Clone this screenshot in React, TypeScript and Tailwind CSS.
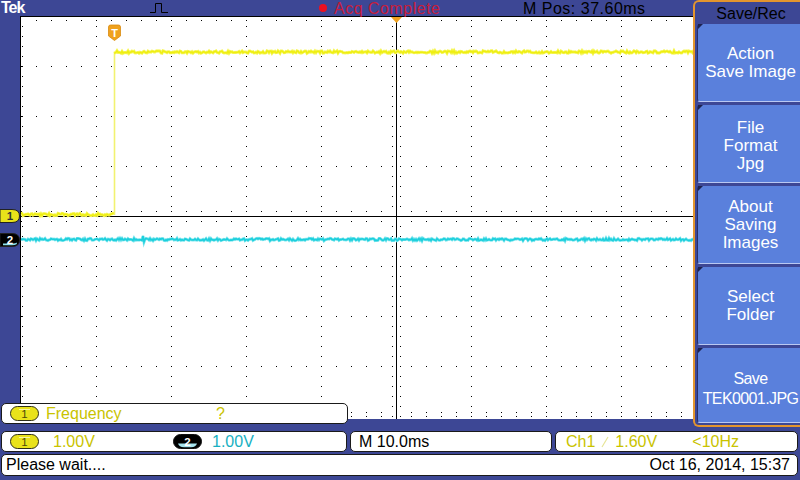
import React from "react";

function rng(seed: number) {
  let a = seed;
  return () => {
    a |= 0;
    a = (a + 0x6d2b79f5) | 0;
    let t = Math.imul(a ^ (a >>> 15), 1 | a);
    t = (t + Math.imul(t ^ (t >>> 7), 61 | t)) ^ t;
    return ((t ^ (t >>> 14)) >>> 0) / 4294967296;
  };
}

const W = 752;
const H = 403;
const CXc = 376;
const CYr = 200;

function Graticule() {
  const dots: React.ReactElement[] = [];
  let k = 0;
  const add = (x: number, y: number, w = 1, h = 1) => {
    dots.push(<rect key={k++} x={x} y={y} width={w} height={h} fill="#000" />);
  };
  const rows = [50, 100, 150, 250, 300, 350, 400];
  const cols = [76, 151, 226, 301, 451, 526, 601, 676, 751];
  for (const r of rows) for (let x = 1; x < W; x += 15) add(x, r);
  for (const c of cols) for (let y = 10; y < H; y += 10) add(c, y);
  for (let x = 1; x < W; x += 15) {
    add(x, CYr - 5);
    add(x, CYr + 5);
  }
  for (let y = 10; y < H; y += 10) {
    add(CXc - 4, y);
    add(CXc + 4, y);
  }
  for (let x = 16; x < W; x += 15) add(x, 4);
  for (let y = 10; y < H; y += 10) add(2, y);
  for (let x = 16; x < W; x += 15) add(x, 396);

  const r1 = rng(7);
  const yl: string[] = [];
  for (let x = 1; x <= 94; x++) yl.push(`${x},${(198.5 + (r1() - 0.5) * 2.4).toFixed(1)}`);
  const yh: string[] = [];
  for (let x = 94; x <= 700; x++) yh.push(`${x},${(36 + (r1() - 0.5) * 2.4).toFixed(1)}`);
  const r2 = rng(21);
  const cy: string[] = [];
  for (let x = 1; x <= 700; x++) {
    let v = 223.5 + (r2() - 0.5) * 2.4;
    if (x === 123) v = 220;
    if (x === 124) v = 226;
    cy.push(`${x},${v.toFixed(1)}`);
  }

  return (
    <svg width={W} height={H} viewBox={`0 0 ${W} ${H}`} shapeRendering="crispEdges" className="block shrink-0">
      <rect x="0" y="0" width={W} height={H} fill="#ffffff" />
      <rect x="0" y="0" width={W} height="1" fill="#000" />
      <rect x="0" y="0" width="1" height={H} fill="#000" />
      <rect x="0" y={CYr} width={W} height="1" fill="#000" />
      <rect x={CXc} y="0" width="1" height={H} fill="#000" />
      {dots}
      <g shapeRendering="auto">
        <polyline points={yl.join(" ")} fill="none" stroke="#f6f65a" strokeWidth="3" />
        <polyline points={yl.join(" ")} fill="none" stroke="#eeee10" strokeWidth="1.4" />
        <line x1="94.5" y1="36" x2="94.5" y2="199" stroke="#f2f270" strokeWidth="1.6" />
        <polyline points={yh.join(" ")} fill="none" stroke="#f6f65a" strokeWidth="3" />
        <polyline points={yh.join(" ")} fill="none" stroke="#eeee10" strokeWidth="1.4" />
        <polyline points={cy.join(" ")} fill="none" stroke="#7fe6ee" strokeWidth="3" />
        <polyline points={cy.join(" ")} fill="none" stroke="#1ccfdc" strokeWidth="1.6" />
        <path d="M88.5,11 Q88.5,9 90.5,9 H98.5 Q100.5,9 100.5,11 V20 L94.5,24.5 L88.5,20 Z" fill="#f0a21e" stroke="#d88a10" strokeWidth="0.8" />
        <text x="94.5" y="20.5" textAnchor="middle" fontSize="11" fontWeight="bold" fill="#fff" fontFamily="Liberation Sans, sans-serif">T</text>
        <polygon points="371,1 382,1 376.5,7" fill="#f0a21e" />
      </g>
    </svg>
  );
}

function LeftMarker({ n, fill, text, band }: { n: string; fill: string; text: string; band?: boolean }) {
  return (
    <svg width="20" height="14" viewBox="0 0 20 14" className="block">
      <path d="M0,0.5 H12 Q19.5,0.5 19.5,7 Q19.5,13.5 12,13.5 H0 Z" fill={fill} stroke="#222" strokeWidth="1" />
      {band ? <path d="M3,10.5 H13 Q16,10.5 16.5,9.5 L17,11 Q15,12.3 12,12.3 H3 Z" fill="#8fe3ec" /> : null}
      <text x="10" y="11" textAnchor="middle" fontSize="11.5" fontWeight="bold" fill={text} fontFamily="Liberation Sans, sans-serif">{n}</text>
    </svg>
  );
}

function Pill1() {
  return (
    <svg width="29" height="15" viewBox="0 0 29 15" className="block shrink-0">
      <rect x="0.5" y="0.5" width="28" height="14" rx="7" fill="#e9e21a" stroke="#2e2e18" />
      <rect x="9" y="3" width="11" height="1" fill="#f8f4a0" />
      <text x="14.5" y="12" textAnchor="middle" fontSize="11.5" fill="#4e4a08" fontFamily="Liberation Sans, sans-serif">1</text>
    </svg>
  );
}

function Pill2() {
  return (
    <svg width="29" height="15" viewBox="0 0 29 15" className="block shrink-0">
      <rect x="0.5" y="0.5" width="28" height="14" rx="7" fill="#000" stroke="#111" />
      <path d="M5,9.5 H24 Q23,13 18,13.2 H11 Q6,13 5,9.5 Z" fill="#a6e4ee" />
      <text x="14.5" y="11.5" textAnchor="middle" fontSize="11.5" fontWeight="bold" fill="#fff" fontFamily="Liberation Sans, sans-serif">2</text>
    </svg>
  );
}

function MenuButton({ lines, h, tight, pad }: { lines: string[]; h: string; tight?: boolean; pad?: string }) {
  return (
    <div
      className={`relative ${h} ${pad ?? ""} bg-[#5a80dc] rounded-l-[3px] border-l border-[#27306a] border-b border-b-[#b9c8f2] flex flex-col items-center justify-center text-white text-[17px] leading-[18px]`}
    >
      <svg width="5" height="5" className="absolute left-0 top-0">
        <polygon points="0,0 5,0 0,5" fill="#1d2250" />
      </svg>
      {lines.map((l) => (
        <span key={l} className={tight ? "text-[16px] tracking-[-0.6px] leading-[20px]" : ""}>
          {l}
        </span>
      ))}
    </div>
  );
}

export default function App() {
  return (
    <div className="relative w-[800px] h-[480px] overflow-hidden bg-[#3d4795] flex flex-col font-['Liberation_Sans',Arial,sans-serif]">
      {/* status bar */}
      <div className="h-[16px] shrink-0 flex items-center text-[16px] leading-[16px]">
        <span className="ml-[1px] w-[149px] text-[16px] leading-[16px] font-black text-white tracking-[-1px]">Tek</span>
        <svg width="18" height="12" viewBox="0 0 18 12" className="block">
          <path d="M0,10.5 H5.5 V1.5 H11.5 V10.5 H18" fill="none" stroke="#000" strokeWidth="1" />
        </svg>
        <span className="ml-[151px] w-[8px] h-[8px] rounded-full bg-[#ec1020]" />
        <span className="ml-[7px] w-[189px] text-[#c71d3c] tracking-[0.5px] translate-y-[1px]">Acq Complete</span>
        <span className="text-black tracking-[0.5px] translate-y-[1px]">M Pos: 37.60ms</span>
      </div>

      {/* display */}
      <div className="flex h-[403px] shrink-0">
        <div className="relative w-[20px] shrink-0">
          <div className="absolute left-0 top-[193px]">
            <LeftMarker n="1" fill="#e9e21a" text="#333" />
          </div>
          <div className="absolute left-0 top-[217px]">
            <LeftMarker n="2" fill="#000" text="#fff" band />
          </div>
        </div>
        <Graticule />
      </div>

      {/* readouts */}
      <div className="mt-[12px] h-[21px] shrink-0 flex gap-[3px] pl-[1px] text-[16px] leading-[18px]">
        <div className="w-[346px] bg-white rounded-[5px] border border-[#1a1a1a] flex items-center pl-[8px]">
          <Pill1 />
          <span className="ml-[14px] w-[120px] text-[#c9c300]">1.00V</span>
          <Pill2 />
          <span className="ml-[10px] text-[#18b0c2]">1.00V</span>
        </div>
        <div className="w-[202px] bg-white rounded-[5px] border border-[#1a1a1a] flex items-center pl-[8px] text-black">
          M 10.0ms
        </div>
        <div className="w-[243px] bg-white rounded-[5px] border border-[#1a1a1a] flex items-center pl-[10px]">
          <span className="text-[#c9c300]">Ch1</span>
          <svg width="8" height="12" viewBox="0 0 8 12" className="ml-[6px] block">
            <path d="M1,11 L7,1" stroke="#e6e496" strokeWidth="1.2" />
          </svg>
          <span className="ml-[6px] w-[77px] text-[#c9c300]">1.60V</span>
          <span className="text-[#c9c300]">&lt;10Hz</span>
        </div>
      </div>
      <div className="mt-[2px] h-[22px] shrink-0 pl-[1px] pr-[2px] text-[16px] leading-[18px]">
        <div className="h-full bg-white rounded-[5px] border border-[#1a1a1a] flex items-center justify-between pl-[4px] pr-[7px] text-black">
          <span>Please wait....</span>
          <span>Oct 16, 2014, 15:37</span>
        </div>
      </div>

      {/* measurement overlay */}
      <div className="absolute left-[1px] top-[403px] w-[347px] h-[21px] bg-white rounded-[5px] border border-[#1a1a1a] flex items-center pl-[8px] text-[16px] leading-[18px]">
        <Pill1 />
        <span className="ml-[7px] w-[170px] text-[#c9c300]">Frequency</span>
        <span className="text-[#c9c300]">?</span>
      </div>

      {/* side menu */}
      <div className="absolute left-[693px] top-0 w-[110px] h-[427px] bg-[#3d4795] border-2 border-r-0 border-[#e3952e] rounded-l-[6px] flex flex-col">
        <div className="h-[22px] shrink-0 flex items-center justify-center text-[16px] text-black leading-[18px] pt-[2px] pl-[4px]">
          Save/Rec
        </div>
        <div className="flex flex-col gap-[3px] pl-[2px]">
          <MenuButton h="h-[78px]" lines={["Action", "Save Image"]} />
          <MenuButton h="h-[78px]" lines={["File", "Format", "Jpg"]} pad="pt-[4px]" />
          <MenuButton h="h-[78px]" lines={["About", "Saving", "Images"]} />
          <MenuButton h="h-[78px]" lines={["Select", "Folder"]} />
          <MenuButton h="h-[75px]" lines={["Save", "TEK0001.JPG"]} tight pad="pt-[7px]" />
        </div>
      </div>
    </div>
  );
}
